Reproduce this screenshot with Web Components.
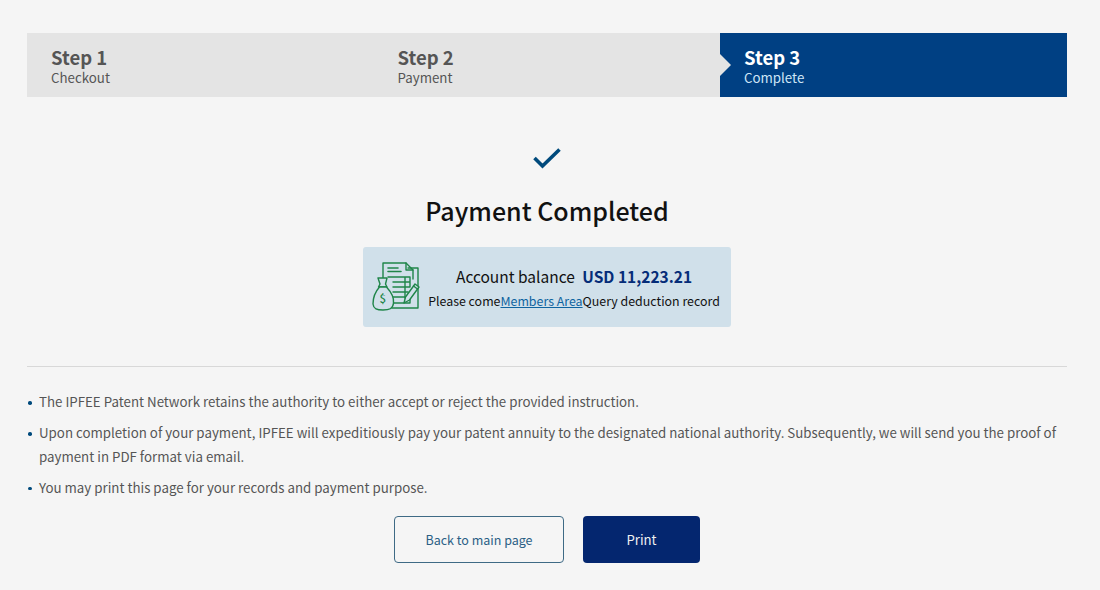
<!DOCTYPE html>
<html lang="en">
<head>
<meta charset="utf-8">
<title>Payment Completed</title>
<style>
  html, body { margin: 0; padding: 0; background: #f5f5f5; }
  body { font-family: "Noto Sans CJK TC", "Noto Sans", sans-serif; height: 590px; overflow: hidden; }
</style>
</head>
<body>
<payment-page>
  <step-bar>
    <step-item num="Step 1" label="Checkout"></step-item>
    <step-item num="Step 2" label="Payment"></step-item>
    <step-item num="Step 3" label="Complete" active></step-item>
  </step-bar>
  <done-banner title="Payment Completed"></done-banner>
  <balance-card amount="USD 11,223.21"></balance-card>
  <note-list>
    <li>The IPFEE Patent Network retains the authority to either accept or reject the provided instruction.</li>
    <li>Upon completion of your payment, IPFEE will expeditiously pay your patent annuity to the designated national authority. Subsequently, we will send you the proof of payment in PDF format via email.</li>
    <li>You may print this page for your records and payment purpose.</li>
  </note-list>
  <action-bar></action-bar>
</payment-page>

<script>
class PaymentPage extends HTMLElement {
  constructor() {
    super();
    this.attachShadow({ mode: "open" });
    this.shadowRoot.innerHTML = `
      <style>
        :host { display: block; padding: 33px 33px 0 27px; }
      </style>
      <slot></slot>`;
  }
}

class StepBar extends HTMLElement {
  constructor() {
    super();
    this.attachShadow({ mode: "open" });
    this.shadowRoot.innerHTML = `
      <style>
        :host { display: grid; grid-template-columns: 346.5px 346.5px 347px; height: 64px; background: #e4e4e4; }
      </style>
      <slot></slot>`;
  }
}

class StepItem extends HTMLElement {
  constructor() {
    super();
    this.attachShadow({ mode: "open" });
    this.shadowRoot.innerHTML = `
      <style>
        :host { display: block; position: relative; padding: 12px 0 0 24px; color: #555; }
        :host([active]) { background: #004083; color: #fff; }
        :host([active])::before {
          content: ""; position: absolute; left: 0; top: 21px;
          border-left: 11px solid #e4e4e4;
          border-top: 11px solid transparent;
          border-bottom: 11px solid transparent;
        }
        .num { font-size: 18.5px; font-weight: 700; line-height: 25px; }
        .label { font-size: 13.3px; line-height: 15px; }
        :host([active]) .label { color: #cfe6f7; }
      </style>
      <div class="num">${this.getAttribute("num")}</div>
      <div class="label">${this.getAttribute("label")}</div>`;
  }
}

class DoneBanner extends HTMLElement {
  constructor() {
    super();
    this.attachShadow({ mode: "open" });
    this.shadowRoot.innerHTML = `
      <style>
        :host { display: flex; flex-direction: column; align-items: center; padding-top: 50px; }
        svg { display: block; }
        h1 { margin: 23px 0 0; font-size: 25px; line-height: 36px; font-weight: 500; color: #111; }
      </style>
      <svg width="30" height="22" viewBox="0 0 30 22" fill="none">
        <path d="M2.5 11 L10.5 19 L27.5 2.5" stroke="#004a7c" stroke-width="3.6"/>
      </svg>
      <h1>${this.getAttribute("title")}</h1>`;
  }
}

class BalanceCard extends HTMLElement {
  constructor() {
    super();
    this.attachShadow({ mode: "open" });
    this.shadowRoot.innerHTML = `
      <style>
        :host {
          display: flex; align-items: center; box-sizing: border-box;
          width: 368px; height: 80px; margin: 19px auto 0;
          padding: 0 10px 0 9px; gap: 7px;
          background: #d0e0ea; border-radius: 3px; color: #111;
        }
        svg { flex: none; display: block; }
        .text { flex: 1; text-align: center; white-space: nowrap; }
        .top { font-size: 15.5px; line-height: 24px; margin-top: 3px; }
        .sub { font-size: 12.4px; line-height: 25px; margin-top: 1px; }
        .top b { font-weight: 700; color: #052c78; margin-left: 4px; }
        a { color: #0f64a0; text-decoration: underline; }
      </style>
      <svg width="48" height="50" viewBox="0 0 48 50" fill="none" stroke="#1f8549" stroke-width="1.4" stroke-linejoin="round" stroke-linecap="round">
        <path d="M36 6 H46 V46 H20"/>
        <path d="M11 16 V1 H34 L41 8 V17"/>
        <path d="M34 1 V8 H41"/>
        <path d="M16 6 H26 M16 9.5 H29" stroke-width="1.6"/>
        <path d="M16 15 H38 V25 M38 37 V41 H21 M21 20 H38 M21 25 H38 M21 30 H36 M21 35 H33 M33 15 V36"/>
        <path d="M32 41 L33.5 35 L43 22 L47 25 L37.5 38 Z" fill="#d0e0ea"/>
        <path d="M41.5 24 L45.5 27"/>
        <path d="M6 16 L15 16 L13.5 22 L15 25 H6.5 L8 22 Z" fill="#d0e0ea"/>
        <path d="M7.5 25 H14.5 C20 31 22 37 21.5 41 C21 47 17 48 11 48 C5 48 1.5 47 1 42 C1 37 3 30 7.5 25 Z" fill="#d0e0ea"/>
        <text x="7.5" y="41" font-family="Noto Sans CJK TC, sans-serif" font-size="11.5" font-weight="500" fill="#1f8549" stroke="none">$</text>
      </svg>
      <div class="text">
        <div class="top">Account balance <b>${this.getAttribute("amount")}</b></div>
        <div class="sub">Please come<a href="#">Members Area</a>Query deduction record</div>
      </div>`;
  }
}

class NoteList extends HTMLElement {
  constructor() {
    super();
    this.attachShadow({ mode: "open" });
    this.shadowRoot.innerHTML = `
      <style>
        :host {
          display: block; margin-top: 39px; padding-top: 23px;
          border-top: 1px solid #d8d8d8;
          font-size: 13.3px; line-height: 23.5px; color: #555;
        }
        ul { margin: 0; padding: 0 0 0 12px; list-style: none; }
        ::slotted(li) { position: relative; margin-bottom: 7.5px; }
        ::slotted(li)::before {
          content: ""; position: absolute; left: -11px; top: 11px;
          width: 3.5px; height: 3.5px; border-radius: 50%; background: #004a7c;
        }
      </style>
      <ul><slot></slot></ul>`;
  }
}

class ActionBar extends HTMLElement {
  constructor() {
    super();
    this.attachShadow({ mode: "open" });
    this.shadowRoot.innerHTML = `
      <style>
        :host { display: flex; justify-content: center; gap: 19px; margin: 17px 0 0; }
        button {
          box-sizing: border-box; height: 47px; border-radius: 4px;
          font: inherit; cursor: pointer;
        }
        .back { width: 170px; font-size: 12.5px; background: transparent; color: #2b5f85; border: 1px solid #3e6a85; }
        .print { width: 117px; font-size: 13.2px; background: #04266f; color: #f0f0f0; border: 0; }
      </style>
      <button class="back">Back to main page</button>
      <button class="print">Print</button>`;
  }
}

customElements.define("payment-page", PaymentPage);
customElements.define("step-bar", StepBar);
customElements.define("step-item", StepItem);
customElements.define("done-banner", DoneBanner);
customElements.define("balance-card", BalanceCard);
customElements.define("note-list", NoteList);
customElements.define("action-bar", ActionBar);
</script>
</body>
</html>
